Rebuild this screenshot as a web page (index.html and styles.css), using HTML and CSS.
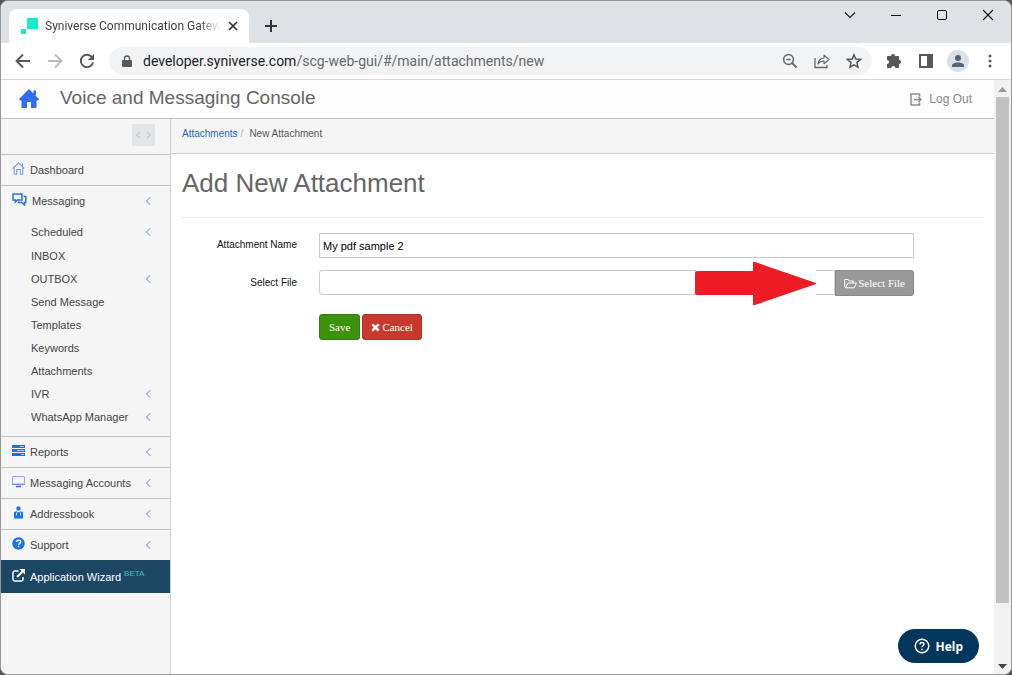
FILE: index.html
```html
<!DOCTYPE html>
<html lang="en">
<head>
<meta charset="utf-8">
<title>Syniverse Communication Gateway</title>
<link rel="stylesheet" href="styles.css">
</head>
<body>
<div class="window">
  <div class="tabstrip">
    <div class="tab">
      <svg class="favicon" width="17" height="17" viewBox="0 0 17 17"><path fill="#14eccb" d="M6 0h11v11H6zM0 11h5v5H0z"/></svg>
      <span class="tab-title">Syniverse Communication Gateway</span>
      <button class="plain" aria-label="Close tab"><svg width="10" height="10" viewBox="0 0 10 10"><path d="M1 1l8 8M9 1L1 9" stroke="#333" stroke-width="1.7"/></svg></button>
    </div>
    <button class="plain new-tab" aria-label="New tab"><svg width="14" height="14" viewBox="0 0 14 14"><path d="M7 1v12M1 7h12" stroke="#333" stroke-width="2"/></svg></button>
    <div class="window-controls">
      <button class="plain" aria-label="Search tabs"><svg width="12" height="12" viewBox="0 0 12 12"><path d="M1 3.500l5 5 5-5" fill="none" stroke="#222" stroke-width="1.200"/></svg></button>
      <button class="plain" aria-label="Minimize"><svg width="12" height="12" viewBox="0 0 12 12"><path d="M1 6.500h10" stroke="#111"/></svg></button>
      <button class="plain" aria-label="Maximize"><svg width="12" height="12" viewBox="0 0 12 12"><rect x="1.500" y="1.500" width="9" height="9" rx="1.500" fill="none" stroke="#111"/></svg></button>
      <button class="plain" aria-label="Close"><svg width="12" height="12" viewBox="0 0 12 12"><path d="M1 1l10 10M11 1L1 11" stroke="#111" stroke-width="1.100"/></svg></button>
    </div>
  </div>

  <div class="toolbar">
    <button class="plain nav" aria-label="Back"><svg width="16" height="16" viewBox="0 0 16 16"><path d="M15 8H2M8 1.500L1.500 8 8 14.500" fill="none" stroke="#55585c" stroke-width="1.900"/></svg></button>
    <button class="plain nav" aria-label="Forward"><svg width="16" height="16" viewBox="0 0 16 16"><path d="M1 8h13M8 1.500L14.500 8 8 14.500" fill="none" stroke="#b9bbbe" stroke-width="1.900"/></svg></button>
    <button class="plain nav" aria-label="Reload"><svg width="16" height="16" viewBox="0 0 16 16"><path d="M13.200 4.500A6.200 6.200 0 1 0 14 9.500" fill="none" stroke="#55585c" stroke-width="1.900"/><path d="M15 1v6H9z" fill="#55585c"/></svg></button>
    <div class="omnibox">
      <svg width="10" height="13" viewBox="0 0 10 13"><rect x="0" y="5" width="10" height="7" rx="1" fill="#55585c"/><path d="M2.500 6V3.500a2.500 2.500 0 0 1 5 0V6" fill="none" stroke="#55585c" stroke-width="1.300"/></svg>
      <span class="url"><span class="host">developer.syniverse.com</span>/scg-web-gui/#/main/attachments/new</span>
      <button class="plain" aria-label="Zoom"><svg width="16" height="16" viewBox="0 0 16 16"><circle cx="6.500" cy="6.500" r="4.900" fill="none" stroke="#66696d" stroke-width="1.500"/><path d="M4.300 6.500h4.400" stroke="#66696d" stroke-width="1.300"/><path d="M10 10l4.500 4.500" stroke="#66696d" stroke-width="1.900"/></svg></button>
      <button class="plain" aria-label="Share"><svg width="16" height="16" viewBox="0 0 16 16"><path d="M1 5v9.500h12V12" fill="none" stroke="#66696d" stroke-width="1.300"/><path d="M4 11c.5-4 2.500-5.800 6-6V2.200L15 6.500l-5 4.200V8c-2.800 0-4.500.8-6 3z" fill="none" stroke="#66696d" stroke-width="1.200" stroke-linejoin="round"/></svg></button>
      <button class="plain" aria-label="Bookmark"><svg width="16" height="16" viewBox="0 0 16 16"><path d="M8 1.800l1.800 4.300 4.700.4-3.600 3.100 1.100 4.600L8 11.800l-4 2.400 1.100-4.600L1.500 6.500l4.700-.4z" fill="none" stroke="#55585c" stroke-width="1.500"/></svg></button>
    </div>
    <div class="actions">
      <button class="plain" aria-label="Extensions"><svg width="16" height="16" viewBox="0 0 16 16"><path fill="#55585c" d="M5 3a2 2 0 0 1 4 0h3.200q.9 0 .9.900v3a2 2 0 0 1 0 4v3.200q0 .9-.9.900H9.300a2 2 0 0 0-4 0H1.800q-.8 0-.8-.9v-3a2 2 0 0 0 0-4V3.900q0-.9.800-.9z"/></svg></button>
      <button class="plain" aria-label="Side panel"><svg width="16" height="16" viewBox="0 0 16 16"><path fill="#55585c" fill-rule="evenodd" d="M1 1h14v14H1zM3 3v10h6V3z"/></svg></button>
      <button class="plain avatar" aria-label="Profile"><svg width="14" height="14" viewBox="0 0 14 14"><circle cx="7" cy="4" r="3" fill="#55627a"/><path d="M1 13v-1.500C1 9.500 4 8.500 7 8.500s6 1 6 3V13z" fill="#55627a"/></svg></button>
      <button class="plain" aria-label="Menu"><svg width="16" height="16" viewBox="0 0 16 16" fill="#55585c"><circle cx="8" cy="3" r="1.500"/><circle cx="8" cy="8" r="1.500"/><circle cx="8" cy="13" r="1.500"/></svg></button>
    </div>
  </div>

  <div class="viewport">
    <div class="page">
      <header class="app-header">
        <a class="home" href="#" aria-label="Home"><svg width="20" height="19" viewBox="0 0 20 19"><path fill="#2f6ff0" d="M10 0l10 10-1 1.500h-1.500V19H12v-6H8v6H2.500v-7.500H1L0 10zM14.500 1.500h2.500V6h-2.500z"/></svg></a>
        <span class="app-title">Voice and Messaging Console</span>
        <a class="logout" href="#"><svg width="12" height="13" viewBox="0 0 12 13"><path d="M9.500 3.500V1h-8.500v11h8.500V9.500" fill="none" stroke="#8d8d8d" stroke-width="1.500"/><path d="M4 6.500h7M8.500 4l2.500 2.500L8.500 9" fill="none" stroke="#8d8d8d" stroke-width="1.500"/></svg>Log Out</a>
      </header>
      <div class="columns">
        <nav class="sidebar">
          <div class="collapse-bar"><button class="plain collapse" aria-label="Collapse sidebar"><svg width="17" height="8" viewBox="0 0 17 8"><path d="M5 1L1.500 4 5 7M12 1l3.500 3L12 7" fill="none" stroke="#bbb"/></svg></button></div>
          <ul class="menu">
            <li><a href="#"><svg width="13" height="13" viewBox="0 0 13 13"><path d="M.7 6.500L6.500 1l5.800 5.500M2.200 6v6.300h2.500V7.500h3.600v4.800h2.500V6M10.500 1.200v3" fill="none" stroke="#7f9be8" stroke-width="1.100"/></svg>Dashboard</a></li>
            <li><a href="#"><svg width="15" height="13" viewBox="0 0 15 13"><path d="M1 1h9v6H5.500L3.300 9V7H1z" fill="none" stroke="#2673dd" stroke-width="1.500"/><path d="M11.500 3.500h2.300v6h-1.300V12L9.500 9.500H6.500V8.500" fill="none" stroke="#2673dd" stroke-width="1.500"/></svg>Messaging<i class="chev"></i></a>
              <ul class="submenu">
                <li><a href="#">Scheduled<i class="chev"></i></a></li>
                <li><a href="#">INBOX</a></li>
                <li><a href="#">OUTBOX<i class="chev"></i></a></li>
                <li><a href="#">Send Message</a></li>
                <li><a href="#">Templates</a></li>
                <li><a href="#">Keywords</a></li>
                <li><a href="#">Attachments</a></li>
                <li><a href="#">IVR<i class="chev"></i></a></li>
                <li><a href="#">WhatsApp Manager<i class="chev"></i></a></li>
              </ul>
            </li>
            <li><a href="#"><svg width="13" height="13" viewBox="0 0 13 13"><path fill="#1673ea" d="M0 1h13v3H0zM0 5h13v3H0zM0 9h13v3H0z"/><path d="M8 2.500h4M5 6.500h7M9 10.500h3" stroke="#a9cbf8"/></svg>Reports<i class="chev"></i></a></li>
            <li><a href="#"><svg width="13" height="13" viewBox="0 0 13 13"><rect x=".5" y="1.500" width="12" height="7.500" rx=".5" fill="#f2f3ff" stroke="#8fa8f0"/><path d="M0 9.500h13" stroke="#6b93ee"/><path d="M4 11.500h5" stroke="#2673dd" stroke-width="1.500"/></svg>Messaging Accounts<i class="chev"></i></a></li>
            <li><a href="#"><svg width="13" height="13" viewBox="0 0 13 13"><circle cx="6.500" cy="2.500" r="2.200" fill="#1673ea"/><path fill="#1673ea" d="M2 6l3-.8L6.500 8 8 5.200l3 .8v6.500H2z"/><path d="M4.500 6.500v3M8.500 6.500v3" stroke="#fff" stroke-width=".8"/><path d="M6 6h1l.5 4-1 1-1-1z" fill="#1673ea"/></svg>Addressbook<i class="chev"></i></a></li>
            <li><a href="#"><svg width="13" height="13" viewBox="0 0 13 13"><circle cx="6.500" cy="6.500" r="6.200" fill="#1673ea"/><path d="M4.500 5c0-2.500 4.200-2.300 4.200 0 0 1.300-2.200 1.300-2.200 2.800M6.500 8.800v1.500" fill="none" stroke="#fff" stroke-width="1.500"/></svg>Support<i class="chev"></i></a></li>
            <li class="wizard"><a href="#"><svg width="13" height="13" viewBox="0 0 13 13"><path d="M6.500 2H3Q1 2 1 4v6q0 2 2 2h6q2 0 2-2V8" fill="none" stroke="#fff" stroke-width="1.500"/><path d="M5 8l5.500-5.500" stroke="#fff" stroke-width="1.900"/><path d="M7.500 0H13v5.500z" fill="#fff"/></svg>Application Wizard<sup>BETA</sup></a></li>
          </ul>
        </nav>
        <main class="content">
          <div class="crumbs"><a href="#">Attachments</a><span class="slash">/</span><span>New Attachment</span></div>
          <div class="body">
            <h1>Add New Attachment</h1>
            <form class="form">
              <label for="name">Attachment Name</label>
              <input class="field" id="name" type="text" value="My pdf sample 2">
              <label for="file">Select File</label>
              <div class="file-row">
                <input class="field file" id="file" type="text">
                <button class="btn select" type="button"><svg width="13" height="11" viewBox="0 0 13 11"><path d="M1.500 9.500L.7 8.500V1.500h3.500l1 1.500h4v2M1.500 9.800L4 5h8.500l-2.300 4.800z" fill="none" stroke="#fff" stroke-linejoin="round"/></svg>Select File</button>
                <svg class="arrow" width="141" height="43" viewBox="0 0 141 43"><path fill="#fff" d="M1 7h120v28H1z"/><path fill="#ed1c24" d="M2 9h56V0h2l61 21v1L60 43h-2V33H2q-2 0-2-2V11q0-2 2-2z"/></svg>
              </div>
              <div class="form-actions">
                <button class="btn save" type="button">Save</button>
                <button class="btn cancel" type="button"><svg width="9" height="9" viewBox="0 0 9 9"><path d="M1.300 1.300l6.400 6.400M7.700 1.300L1.300 7.700" stroke="#fff" stroke-width="2.500"/></svg>Cancel</button>
              </div>
            </form>
          </div>
        </main>
      </div>
    </div>
    <div class="scrollbar">
      <svg width="9" height="5" viewBox="0 0 9 5"><path d="M0 5h9L4.500 0z" fill="#999"/></svg>
      <div class="thumb"></div>
      <svg width="9" height="5" viewBox="0 0 9 5"><path d="M0 0h9L4.500 5z" fill="#444"/></svg>
    </div>
  </div>
  <button class="help" type="button"><svg width="16" height="16" viewBox="0 0 16 16"><circle cx="8" cy="8" r="6.800" fill="none" stroke="#fff" stroke-width="1.500"/><path d="M6 6.500c0-2.700 4-2.500 4-.2 0 1.400-2 1.500-2 3M8 10.700v1.500" fill="none" stroke="#fff" stroke-width="1.500"/></svg>Help</button>
</div>
</body>
</html>
```
FILE: styles.css
```css
* { box-sizing: border-box; }
body { margin: 0; background: #55565a; font-family: "Liberation Sans", Arial, sans-serif; font-size: 11px; color: #444; }
a { color: inherit; text-decoration: none; }
ul { list-style: none; margin: 0; padding: 0; }
svg { flex: none; display: block; }
.plain { border: 0; padding: 0; background: none; display: flex; align-items: center; justify-content: center; }

.window { position: relative; display: flex; flex-direction: column; min-height: 100vh; border: 1px solid #97989a; border-radius: 8px; overflow: hidden; background: #fff; }

.tabstrip { display: flex; height: 42px; background: #dee1e6; }
.tab { display: flex; align-items: center; width: 240px; margin: 8px 0 0 8px; padding: 0 11px 0 12px; border-radius: 8px 8px 0 0; background: #fff; }
.tab-title { flex: 1; margin: 0 8px 0 7px; overflow: hidden; white-space: nowrap; font: 12px Roboto, "Open Sans", sans-serif; color: #3c4043; -webkit-mask-image: linear-gradient(to right, #000 88%, transparent); mask-image: linear-gradient(to right, #000 88%, transparent); }
.new-tab { margin: 8px 0 0 15px; }
.window-controls { display: flex; gap: 34px; align-items: center; height: 28px; margin-left: auto; padding-right: 17px; }

.toolbar { display: flex; align-items: center; height: 37px; padding: 0 13px 0 14px; border-bottom: 1px solid #d6d8da; }
.nav { width: 16px; margin-right: 16px; }
.omnibox { display: flex; flex: 1; align-items: center; gap: 16px; height: 28px; margin-left: -2px; padding: 0 10px 0 13px; border-radius: 14px; background: #f1f3f4; }
.omnibox .url { flex: 1; margin-left: -5px; overflow: hidden; white-space: nowrap; font: 14px Roboto, "Open Sans", sans-serif; color: #66696d; }
.url .host { color: #202124; }
.actions { display: flex; align-items: center; gap: 16px; margin-left: 14px; }
.avatar { width: 22px; height: 22px; margin: 0 -3px; border-radius: 50%; background: #dadfe8; }

.viewport { display: flex; flex: 1; }
.page { display: flex; flex: 1; flex-direction: column; }
.app-header { display: flex; align-items: center; height: 39px; padding: 0 22px 2px 18px; border-bottom: 1px solid #c6c6c6; background: #fdfdfd; }
.app-title { margin-left: 21px; font-size: 19px; color: #666; }
.logout { display: flex; align-items: center; gap: 7px; margin-left: auto; padding-top: 2px; font-size: 12px; color: #888; }

.columns { display: flex; flex: 1; }
.sidebar { width: 170px; border-right: 1px solid #d0d0d0; background: #f5f5f5; }
.collapse-bar { display: flex; justify-content: flex-end; height: 35px; padding: 5px 15px 0 0; }
.collapse { width: 23px; height: 22px; background: #e4e5e7; }
.menu > li { border-top: 1px solid #c4c4c4; }
.menu a { display: flex; align-items: center; height: 30px; padding: 0 17px 0 11px; }
.menu > li > a > svg { margin: 0 5px 3px 0; }
.submenu { padding: 4px 0 8px; }
.submenu a { height: 23px; padding-left: 30px; }
.submenu li:first-child a { height: 24px; }
.chev { width: 6px; height: 6px; margin-left: auto; border: solid #8fa8ec; border-width: 0 0 1px 1px; transform: rotate(45deg); }
.menu > .wizard { border-color: #1b4763; background: #1b4763; color: #fff; }
.wizard a { height: 32px; }
.wizard sup { margin: -6px 0 0 3px; font-size: 8px; line-height: 8px; color: #36cbb5; }

.content { flex: 1; }
.crumbs { display: flex; height: 35px; align-items: center; padding: 0 0 5px 11px; border-bottom: 1px solid #d0d0d0; background: #f5f5f5; font-size: 10px; color: #555; }
.crumbs a { color: #1a68b8; }
.slash { margin: 0 6px 0 3px; color: #bbb; }
.body { padding: 12px 11px; }
h1 { margin: 0 0 15px; padding-bottom: 17px; border-bottom: 1px solid #eaeaea; font-size: 26px; line-height: 34px; font-weight: normal; color: #666; }
.form { display: grid; grid-template-columns: 115px 1fr; column-gap: 22px; row-gap: 12px; align-items: center; padding-right: 69px; }
.form label { padding-bottom: 2px; font-size: 10px; color: #111; text-align: right; }
.field { width: 100%; height: 25px; padding: 0 3px; border: 1px solid #ccc; background: #fff; font: 11px "Liberation Sans", Arial, sans-serif; color: #000; }
.file-row { position: relative; display: flex; }
.file { flex: 1; border-radius: 3px 0 0 3px; }
.arrow { position: absolute; right: 78px; top: -8px; }
.btn { display: flex; align-items: center; justify-content: center; gap: 2px; height: 26px; padding: 0 9px; border: 1px solid; border-radius: 3px; color: #fff; font: 11px "Liberation Serif", "Times New Roman", serif; white-space: nowrap; }
.btn.select { gap: 1px; padding: 0 8px; border-color: #8a8a8a; background: #999; border-radius: 0 3px 3px 0; }
.form-actions { grid-column: 2; display: flex; gap: 2px; margin-top: 6px; }
.save { border-color: #357d0c; background: #3c920a; }
.btn.cancel { padding: 0 8px; border-color: #ad3226; background: #c9382c; }

.scrollbar { display: flex; flex-direction: column; align-items: center; gap: 5px; width: 17px; padding: 7px 0 5px; background: #f1f1f1; }
.thumb { width: 13px; height: 87%; background: #c1c1c1; }
.scrollbar svg:last-child { margin-top: auto; }

.help { position: absolute; right: 32px; bottom: 11px; display: flex; align-items: center; gap: 5px; height: 34px; padding: 0 16px; border: 0; border-radius: 17px; background: #03365d; color: #fff; font: bold 12px "Noto Sans", "Open Sans", sans-serif; }
```
